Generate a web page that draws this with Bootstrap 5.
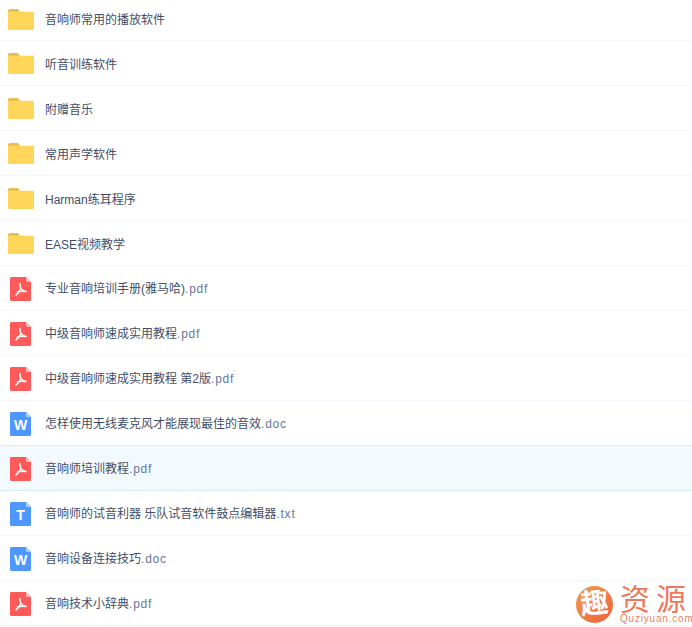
<!DOCTYPE html>
<html lang="zh">
<head>
    <meta charset="UTF-8">
    <meta name="viewport" content="width=device-width, initial-scale=1">
    <link href="https://cdn.jsdelivr.net/npm/bootstrap@5.3.3/dist/css/bootstrap.min.css" rel="stylesheet">
    <script src="https://cdn.jsdelivr.net/npm/bootstrap@5.3.3/dist/js/bootstrap.bundle.min.js"></script>
    <title>文件列表</title>
    <style>
        html, body { height: 627px; overflow: hidden; }
        body { font-family: "Liberation Sans", "Noto Sans CJK SC", sans-serif; font-size: 12px; background: #fff; position: relative; }
        .file-row { height: 45px; border-bottom: 1px solid #f4f6fb; color: #424e67; padding-left: 8px; }
        .file-row:first-child { height: 41px; }
        .file-row:first-child .file-icon { margin-top: -3px; }
        .file-name { padding-top: 2px; }
        .folder-row .file-name { padding-top: 4px; }
        .file-row:first-child .file-name { padding-top: 0; }
        .file-row.active-row { background: #f3faff; border-bottom-color: #d3edff; box-shadow: 0 -1px 0 #dcecf8; }
        .file-ext { color: #66789c; letter-spacing: .8px; }
        .file-icon { width: 37px; flex: none; padding-top: 1px; }
        .doc-icon { margin-left: 2px; margin-right: 2px; }
        .brand { position: absolute; left: 576px; right: 0; top: 585px; gap: 7px; }
        .brand-mark { width: 37px; height: 37px; margin-top: 1px; border-radius: 50%; background: linear-gradient(135deg, #f0a04c, #ef5c3e); flex: none; }
        .brand-glyph { color: #fff; font-size: 28px; line-height: 36px; text-align: center; font-weight: 700; transform: rotate(-6deg); white-space: nowrap; }
        .brand-name { color: #f0785a; font-size: 30px; line-height: 29px; letter-spacing: 6px; white-space: nowrap; }
        .brand-url { color: #ee7f62; font-size: 10px; line-height: 10px; letter-spacing: .8px; }
        .icon-letter { font-family: "Liberation Sans", sans-serif; font-weight: 700; font-size: 14px; fill: #fff; text-anchor: middle; }
    </style>
</head>
<body>
<svg width="0" height="0" class="d-block">
    <symbol id="folder" viewBox="0 0 26 21">
        <path d="M0 2C0 1 .7 0 2 0h7c1 0 1.600.5 2 1.300L12 3H0z" fill="#e9be50"/>
        <path d="M0 4c0-.8.6-1.200 1.200-1.200h23.600c.7 0 1.200.5 1.200 1.200v15.800c0 .7-.5 1.200-1.200 1.200H1.200C.6 21 0 20.500 0 19.800z" fill="#ffd659"/>
    </symbol>
    <symbol id="pdf" viewBox="0 0 21 24">
        <path d="M1.500 0H16l5 5v17.500c0 .8-.7 1.500-1.500 1.500h-18C.7 24 0 23.300 0 22.500v-21C0 .7.700 0 1.500 0z" fill="#ff5a5a"/>
        <path d="M16 0l5 5h-3.500c-.8 0-1.500-.7-1.500-1.500z" fill="#ffb9b9"/>
        <path d="M10 6.500c-.2 2 .3 3.700 1 5.200M11 11.700c-1.300 2.500-3 4.600-5 6.300M11 11.700c1.300 1.500 3 2.500 5 2.800M7.500 15c2.500-.8 5-1 8-.5" fill="none" stroke="#fff" stroke-width="1.500" stroke-linecap="round"/>
    </symbol>
    <symbol id="blue" viewBox="0 0 21 24">
        <path d="M1.500 0H16l5 5v17.500c0 .8-.7 1.500-1.500 1.500h-18C.7 24 0 23.300 0 22.500v-21C0 .7.700 0 1.500 0z" fill="#4d97ff"/>
        <path d="M16 0l5 5h-3.500c-.8 0-1.500-.7-1.500-1.500z" fill="#a9cdff"/>
    </symbol>
</svg>

<div id="fileList"></div>

<div class="brand d-flex align-items-start">
    <div class="brand-mark"><div class="brand-glyph">趣</div></div>
    <div>
        <div class="brand-name">资源</div>
        <div class="brand-url">Quziyuan.com</div>
    </div>
</div>

<script>
    const files = [
        ["folder", "音响师常用的播放软件", ""],
        ["folder", "听音训练软件", ""],
        ["folder", "附赠音乐", ""],
        ["folder", "常用声学软件", ""],
        ["folder", "Harman练耳程序", ""],
        ["folder", "EASE视频教学", ""],
        ["pdf", "专业音响培训手册(雅马哈)", ".pdf"],
        ["pdf", "中级音响师速成实用教程", ".pdf"],
        ["pdf", "中级音响师速成实用教程 第2版", ".pdf"],
        ["word", "怎样使用无线麦克风才能展现最佳的音效", ".doc"],
        ["pdf", "音响师培训教程", ".pdf"],
        ["txt", "音响师的试音利器 乐队试音软件鼓点编辑器", ".txt"],
        ["word", "音响设备连接技巧", ".doc"],
        ["pdf", "音响技术小辞典", ".pdf"]
    ];

    function iconHtml(type) {
        if (type === "folder") return '<svg width="26" height="21"><use href="#folder"/></svg>';
        if (type === "pdf") return '<svg class="doc-icon" width="21" height="24"><use href="#pdf"/></svg>';
        const letter = type === "word" ? "W" : "T";
        return `<svg class="doc-icon" width="21" height="24"><use href="#blue"/><text class="icon-letter" x="10.5" y="18">${letter}</text></svg>`;
    }

    const fileList = document.getElementById("fileList");
    files.forEach((file, i) => {
        const row = document.createElement("div");
        row.className = "file-row d-flex align-items-center" + (i === 10 ? " active-row" : "") + (file[0] === "folder" ? " folder-row" : "");
        row.innerHTML = `
            <div class="file-icon d-flex">${iconHtml(file[0])}</div>
            <div class="file-name">${file[1]}<span class="file-ext">${file[2]}</span></div>
        `;
        fileList.appendChild(row);
    });
</script>
</body>
</html>
